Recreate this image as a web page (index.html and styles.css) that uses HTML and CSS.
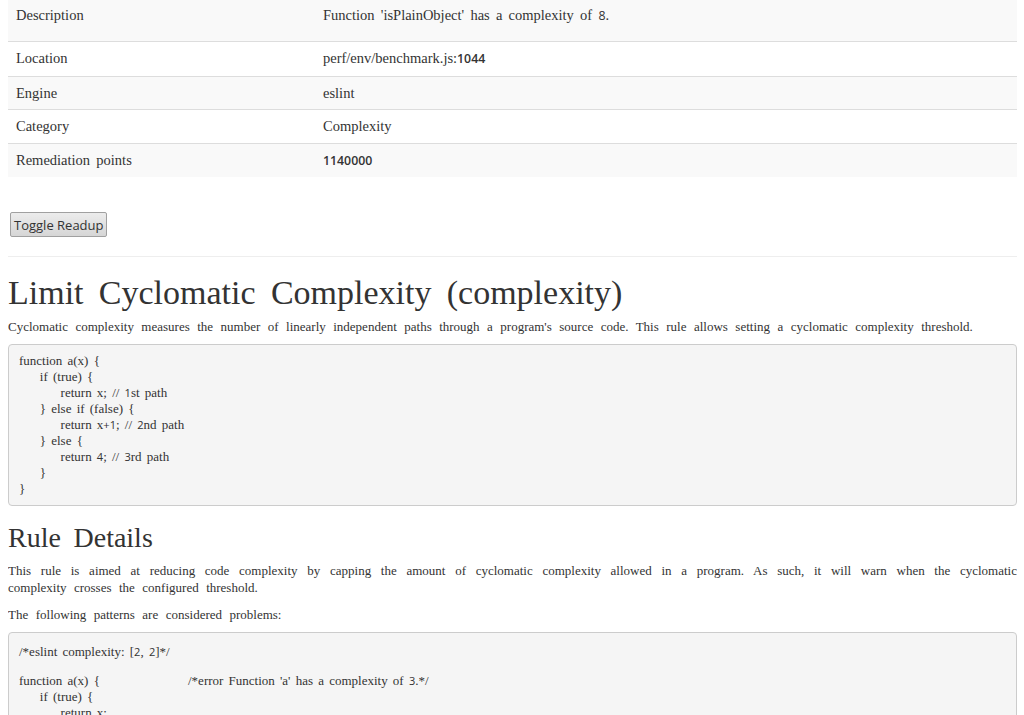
FILE: index.html
```html
<!DOCTYPE html>
<html>
<head>
<meta charset="utf-8">
<link rel="stylesheet" href="styles.css">
</head>
<body>
<table class="info">
  <colgroup><col class="kcol"><col></colgroup>
  <tr class="first"><td>Description</td><td>Function 'isPlainObject' has a complexity of <span class="d">8</span>.</td></tr>
  <tr><td>Location</td><td>perf/env/benchmark.js:<span class="d b">1044</span></td></tr>
  <tr><td>Engine</td><td>eslint</td></tr>
  <tr><td>Category</td><td>Complexity</td></tr>
  <tr><td>Remediation points</td><td><span class="d b">1140000</span></td></tr>
</table>
<button class="toggle">Toggle Readup</button>
<hr class="sep">
<h1>Limit Cyclomatic Complexity (complexity)</h1>
<p class="intro">Cyclomatic complexity measures the number of linearly independent paths through a program's source code. This rule allows setting a cyclomatic complexity threshold.</p>
<pre class="code">function a(x) {
    if (true) {
        return x; // <span class="d">1</span>st path
    } else if (false) {
        return x<span class="d">+1</span>; // <span class="d">2</span>nd path
    } else {
        return <span class="d">4</span>; // <span class="d">3</span>rd path
    }
}</pre>
<h2>Rule Details</h2>
<p class="just">This rule is aimed at reducing code complexity by capping the amount of cyclomatic complexity allowed in a program. As such, it will warn when the cyclomatic complexity crosses the configured threshold.</p>
<p class="plain">The following patterns are considered problems:</p>
<pre class="code code2">/*eslint complexity: [<span class="d">2</span>, <span class="d">2</span>]*/<span class="gap"></span><span class="col">function a(x) {</span>/*error Function 'a' has a complexity of <span class="d">3</span>.*/
    if (true) {
        return x;
    } else if (false) {
        return x<span class="d">+1</span>;
    }
}</pre>
</body>
</html>
```
FILE: styles.css
```css
html, body {
  background: #ffffff;
}
body {
  margin: 0 7px 0 8px;
  font-family: "Liberation Serif", "Times New Roman", serif;
  font-size: 13px;
  line-height: 17px;
  color: #333333;
  word-spacing: 0.325em;
}
.d {
  font-family: "Open Sans", "Noto Sans", sans-serif;
  font-size: 0.88em;
  word-spacing: 0;
}
.b {
  font-weight: 600;
}
.info {
  width: 100%;
  table-layout: fixed;
  border-collapse: collapse;
  margin: 0 0 35px;
  font-size: 14.5px;
  line-height: 16px;
  word-spacing: 0.18em;
}
.info .kcol {
  width: 307px;
}
.info td {
  padding: 8px 8px 8.5px;
  border-top: 1px solid #dddddd;
  vertical-align: top;
}
.info tr:nth-child(odd) td {
  background: #f9f9f9;
}
.info .first td {
  border-top: 0;
  padding: 7px 8px 17px;
}
.info .d {
  font-size: 0.85em;
}
.toggle {
  display: block;
  margin: 0 0 0 2px;
  height: 25px;
  padding: 0 3px;
  font-family: "Open Sans", "Noto Sans", sans-serif;
  font-size: 13px;
  color: #333;
  word-spacing: 0;
  border: 1px solid #a0a0a0;
  border-radius: 2px;
  background: linear-gradient(#ececec, #d6d6d6);
}
.sep {
  border: 0;
  border-top: 1px solid #eeeeee;
  margin: 19px 0 0;
}
h1 {
  font-size: 34px;
  line-height: 38px;
  font-weight: normal;
  margin: 17px 0 6px;
  word-spacing: 0.2em;
}
h2 {
  font-size: 28px;
  line-height: 32px;
  font-weight: normal;
  margin: 16px 0 8px;
  word-spacing: 0.2em;
}
p {
  margin: 0 0 10px;
}
.intro {
  margin-bottom: 9px;
}
.just {
  text-align: justify;
  margin-bottom: 10px;
}
.plain {
  margin-bottom: 9px;
}
.code {
  margin: 0;
  padding: 8px 10px;
  font-family: "Liberation Serif", "Times New Roman", serif;
  font-size: 13px;
  line-height: 16px;
  color: #333;
  background: #f5f5f5;
  border: 1px solid #cccccc;
  border-radius: 4px;
  word-spacing: 0.15em;
  white-space: pre;
}
.code2 {
  padding-top: 11px;
}
.gap {
  display: block;
  height: 13px;
}
.code .d {
  font-size: 0.85em;
}
.col {
  display: inline-block;
  width: 169px;
}
```
